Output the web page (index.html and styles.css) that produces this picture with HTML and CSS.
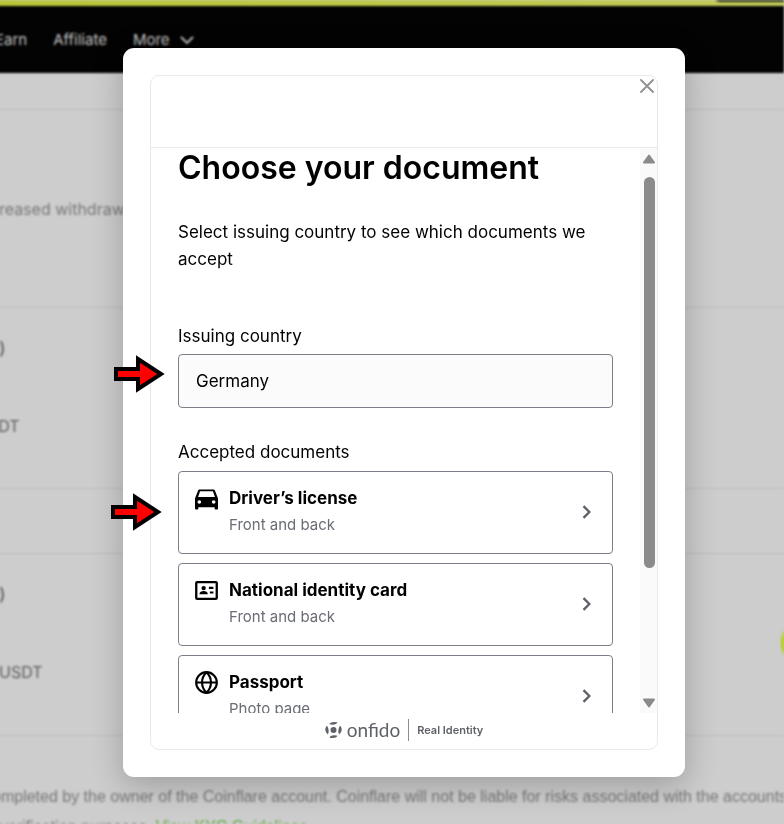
FILE: index.html
```html
<!DOCTYPE html>
<html lang="en">
<head>
    <meta charset="UTF-8">
    <meta name="viewport" content="width=device-width, initial-scale=1">
    <title>Coinflare - Verification</title>
    <link rel="stylesheet" href="styles.css">
</head>
<body>
<div class="page">
    <div class="banner"></div>
    <nav class="nav">
        <a href="#">Earn</a>
        <a href="#">Affiliate</a>
        <a href="#" class="more">More
            <svg width="14" height="10" viewBox="0 0 14 10" fill="none" stroke="currentColor" stroke-width="1.800"><path d="M1 2l6 6 6-6"/></svg>
        </a>
    </nav>
    <main class="levels">
        <section class="intro">Increased withdrawal</section>
        <section class="level">
            <strong>(0)</strong>
            <span>USDT</span>
        </section>
        <section class="spacer"></section>
        <section class="level wide">
            <strong>(0)</strong>
            <span>USDT</span>
        </section>
        <section class="notice">
            <p>completed by the owner of the Coinflare account. Coinflare will not be liable for risks associated with the accounts of</p>
            <p class="second">verification purposes. <a href="#">View KYC Guidelines.</a></p>
        </section>
    </main>
    <div class="pill"></div>
    <div class="chat"></div>
</div>

<div class="overlay">
    <div class="dialog" role="dialog" aria-labelledby="title">
        <div class="frame">
            <header class="top">
                <button class="close" aria-label="Close">
                    <svg width="14" height="14" viewBox="0 0 14 14" fill="none" stroke="#8f9093" stroke-width="1.800" stroke-linecap="round"><path d="M1 1l12 12M13 1L1 13"/></svg>
                </button>
            </header>

            <div class="scroll">
                <div class="content">
                    <h1 id="title">Choose your document</h1>
                    <p class="lead">Select issuing country to see which documents we accept</p>

                    <label class="label" for="country">Issuing country</label>
                    <input class="country" id="country" type="text" value="Germany">

                    <h2 class="label docs-label">Accepted documents</h2>
                    <div class="docs">
                        <button class="doc">
                            <svg class="icon" viewBox="0 0 24 24"><path fill-rule="evenodd" d="M5 2.500h14c1 0 1.600.4 1.900 1.300L24 12v10.500c0 .6-.4 1-1 1h-1.500c-.6 0-1-.4-1-1V21h-17v1.500c0 .6-.4 1-1 1H1c-.6 0-1-.4-1-1V12l3.100-8.200C3.400 2.900 4 2.500 5 2.500zM5.300 4.500L3.200 10.500h17.600l-2.100-6zM4.500 13.800a1.900 1.900 0 1 0 0 3.800 1.900 1.900 0 0 0 0-3.800zM19.500 13.800a1.900 1.900 0 1 0 0 3.800 1.900 1.900 0 0 0 0-3.800z"/></svg>
                            <span class="text"><b>Driver’s license</b><small>Front and back</small></span>
                            <svg class="chevron" viewBox="0 0 8 12"><path d="M1 1l5 5-5 5"/></svg>
                        </button>
                        <button class="doc">
                            <svg class="icon" viewBox="0 0 24 24"><rect x="1.300" y="3.300" width="21.400" height="17.400" rx="1" fill="none" stroke="#000" stroke-width="2.400"/><circle cx="9" cy="9.500" r="2.300"/><path d="M4.600 16c0-4.600 8.800-4.600 8.800 0zM14.500 8.200h4.700v2.200h-4.700zM15.500 13h3.700v2.200h-3.700z"/></svg>
                            <span class="text"><b>National identity card</b><small>Front and back</small></span>
                            <svg class="chevron" viewBox="0 0 8 12"><path d="M1 1l5 5-5 5"/></svg>
                        </button>
                        <button class="doc">
                            <svg class="icon" viewBox="0 0 24 24" fill="none" stroke="#000" stroke-width="2.200"><circle cx="12" cy="12" r="10.800"/><path d="M1.500 12h21M12 1.400c-6.200 6-6.200 15.200 0 21.200M12 1.400c6.200 6 6.200 15.200 0 21.200"/></svg>
                            <span class="text"><b>Passport</b><small>Photo page</small></span>
                            <svg class="chevron" viewBox="0 0 8 12"><path d="M1 1l5 5-5 5"/></svg>
                        </button>
                    </div>
                </div>
                <div class="scrollbar" aria-hidden="true">
                    <svg width="14" height="12" viewBox="0 0 14 12"><path d="M7 2.500l5 7H2z"/></svg>
                    <div class="track"><div class="thumb"></div></div>
                    <svg width="14" height="12" viewBox="0 0 14 12"><path d="M7 9.500l5-7H2z"/></svg>
                </div>
            </div>

            <footer class="brand">
                <svg width="17" height="18" viewBox="0 0 17 18" fill="#5f6169">
                    <circle cx="8.500" cy="9" r="3"/>
                    <path d="M4.300 3.300Q6 .2 12.500 1.300 11 4.500 4.300 3.300zM4.500 16.700Q6 13.500 12.700 14.700 11 17.900 4.500 16.700zM1.900 4.500q3 4.500 1 9Q-1.800 9.500 1.900 4.500zM15.100 4.500q-3 4.500-1 9Q18.800 9.500 15.100 4.500z"/>
                </svg>
                <span class="name">onfido</span>
                <span class="tagline">Real Identity</span>
            </footer>
        </div>

        <svg class="arrow arrow-country" width="54" height="38" viewBox="0 0 54 38"><path d="M5 14h22V4l23 15-23 15V24H5z"/></svg>
        <svg class="arrow arrow-license" width="54" height="38" viewBox="0 0 54 38"><path d="M5 14h22V4l23 15-23 15V24H5z"/></svg>
    </div>
</div>
</body>
</html>
```
FILE: styles.css
```css
* {
    box-sizing: border-box;
}

body {
    margin: 0;
    height: 100vh;
    overflow: hidden;
    background: #cdcdcd;
    font-family: Inter, "Liberation Sans", sans-serif;
}

h1, h2, p {
    margin: 0;
}

button, input {
    font: inherit;
    color: inherit;
}

/* page behind the dialog */
.page {
    height: 100vh;
    margin-left: -48px;
    overflow: hidden;
    filter: blur(1px);
    color: #777;
    font-size: 15px;
}

.page a {
    text-decoration: none;
}

.banner {
    height: 6px;
    background: linear-gradient(90deg, #b8c636, #c2cb5a);
}

.nav {
    display: flex;
    align-items: center;
    gap: 26px;
    height: 67px;
    padding-left: 43px;
    background: #030303;
}

.nav a {
    color: #c4c4c4;
}

.more {
    display: flex;
    align-items: center;
    gap: 10px;
}

.levels {
    display: flex;
    flex-direction: column;
    padding-top: 36px;
}

.levels section {
    border-top: 1px solid #bcbcbc;
    padding-left: 24px;
    white-space: nowrap;
}

.intro {
    height: 198px;
    padding-top: 89px;
    font-size: 16px;
}

.level {
    display: flex;
    flex-direction: column;
    gap: 57px;
    height: 181px;
    padding-top: 31px;
    font-size: 16px;
    color: #5c5c5c;
}

.level strong {
    margin-left: 6px;
    font-size: 17px;
    font-weight: 500;
}

.spacer {
    height: 65px;
}

.wide {
    height: 182px;
}

.wide span {
    margin-left: 23px;
}

.notice {
    padding-top: 46px;
    font-family: "Liberation Sans", sans-serif;
    font-size: 16px;
    line-height: 30px;
}

.notice p {
    margin-left: 8px;
}

.notice .second {
    margin-left: 24px;
}

.notice a {
    color: #5aa83a;
}

.pill {
    position: fixed;
    top: -10px;
    right: -20px;
    width: 90px;
    height: 12px;
    border-radius: 6px;
    background: #26280c;
}

.chat {
    position: fixed;
    right: -53px;
    top: 615px;
    width: 56px;
    height: 56px;
    border-radius: 50%;
    background: #b4d000;
}

/* dialog */
.overlay {
    position: fixed;
    inset: 0;
    display: flex;
    justify-content: center;
    padding: 48px 0 47px 24px;
}

.dialog {
    position: relative;
    display: flex;
    width: 100%;
    max-width: 562px;
    padding: 27px;
    border-radius: 11px;
    background: #fff;
    box-shadow: 0 8px 32px rgba(0, 0, 0, .24);
}

.frame {
    flex: 1;
    display: flex;
    flex-direction: column;
    min-height: 0;
    border: 1px solid #e8e9eb;
    border-radius: 9px;
    color: #000;
}

.top {
    display: flex;
    justify-content: flex-end;
    align-items: flex-start;
    height: 72px;
    padding: 3px 3px 0;
    border-bottom: 1px solid #e8e9eb;
}

.close {
    display: flex;
    padding: 0;
    border: 0;
    background: none;
}

.scroll {
    flex: 1;
    display: flex;
    min-height: 0;
}

.content {
    flex: 1;
    padding: 0 27px;
    overflow: hidden;
    font-size: 17px;
    line-height: 27px;
}

h1 {
    font-size: 32px;
    font-weight: 600;
    line-height: 40px;
}

.lead {
    margin-top: 31px;
}

.label {
    display: block;
    margin-top: 50px;
    font-size: 17px;
    font-weight: 400;
}

.country {
    display: block;
    width: 100%;
    height: 54px;
    margin-top: 4px;
    padding: 0 17px;
    border: 1px solid #7d7f88;
    border-radius: 4px;
    background: #fbfbfb;
}

.docs-label {
    margin-top: 31px;
}

.docs {
    display: flex;
    flex-direction: column;
    gap: 9px;
    margin-top: 5px;
}

.doc {
    display: flex;
    align-items: center;
    gap: 11px;
    padding: 13px 20px 15px 16px;
    border: 1px solid #7d7f88;
    border-radius: 4px;
    background: #fff;
    text-align: left;
}

.icon {
    align-self: flex-start;
    width: 23px;
    height: 23px;
    margin-top: 2px;
}

.text {
    flex: 1;
    display: flex;
    flex-direction: column;
}

.text b {
    font-weight: 700;
}

.text small {
    font-size: 15px;
    line-height: 26px;
    color: #6b6d76;
}

.chevron {
    width: 10px;
    height: 14px;
    fill: none;
    stroke: #5f6169;
    stroke-width: 2;
}

.scrollbar {
    display: flex;
    flex-direction: column;
    align-items: center;
    width: 17px;
    padding: 5px 0 4px 1px;
    background: #fafafa;
}

.scrollbar svg {
    fill: #8b8b8b;
    stroke: #8b8b8b;
    stroke-width: 2;
    stroke-linejoin: round;
}

.track {
    flex: 1;
    padding: 12px 0;
}

.thumb {
    width: 11px;
    height: 77%;
    border-radius: 6px;
    background: #8b8b8b;
}

.brand {
    display: flex;
    justify-content: center;
    align-items: center;
    height: 36px;
    padding-bottom: 2px;
    color: #5f6169;
}

.name {
    margin: 0 8px 0 5px;
    font-family: Lato, sans-serif;
    font-size: 19px;
    line-height: 22px;
}

.tagline {
    padding-left: 8px;
    border-left: 1px solid #8c8d92;
    font-size: 11px;
    font-weight: 600;
    line-height: 22px;
}

/* pointers laid over the dialog */
.arrow {
    position: absolute;
    fill: #f00;
    stroke: #000;
    stroke-width: 4;
}

.arrow-country {
    left: -12px;
    top: 307px;
}

.arrow-license {
    left: -15px;
    top: 445px;
}
```
